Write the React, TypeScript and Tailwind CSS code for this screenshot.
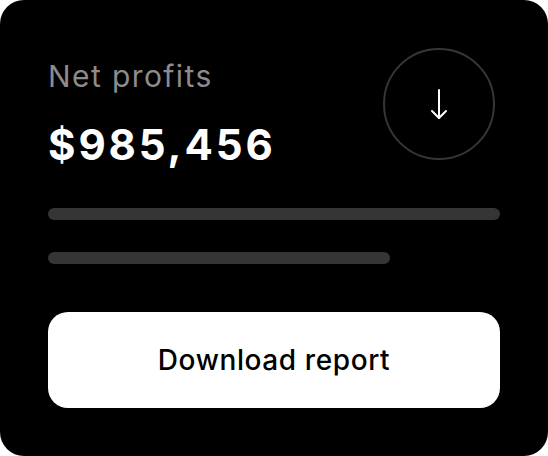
import React from "react";

export default function App() {
  return (
    <div className="w-[548px] h-[456px] bg-white" style={{ fontFamily: "Inter, 'Noto Sans', sans-serif" }}>
      <div className="w-full h-full bg-black rounded-3xl p-12 flex flex-col">
        <div className="flex justify-between items-start h-[112px]">
          <div className="flex flex-col">
            <div className="text-[30px] leading-none text-[#8c8c8c] mt-[13px] tracking-[1.4px]">Net profits</div>
            <div className="text-[42px] leading-none font-bold text-white mt-[33px] tracking-[2.9px]">$985,456</div>
          </div>
          <div className="w-[112px] h-[112px] mr-[5px] rounded-full border-2 border-[#363636] flex items-center justify-center">
            <svg width="20" height="34" viewBox="0 0 20 34" fill="none" stroke="white" strokeWidth="2" strokeLinecap="round" strokeLinejoin="round">
              <path d="M10 3 V31" />
              <path d="M3 24 L10 31 L17 24" />
            </svg>
          </div>
        </div>
        <div className="mt-12 h-3 rounded-full bg-[#353535] w-full" />
        <div className="mt-8 h-3 rounded-full bg-[#353535] w-[342px]" />
        <div className="mt-12 h-24 rounded-[20px] bg-white flex items-center justify-center">
          <span className="text-[28px] font-medium text-black tracking-[0.6px]">Download report</span>
        </div>
      </div>
    </div>
  );
}
